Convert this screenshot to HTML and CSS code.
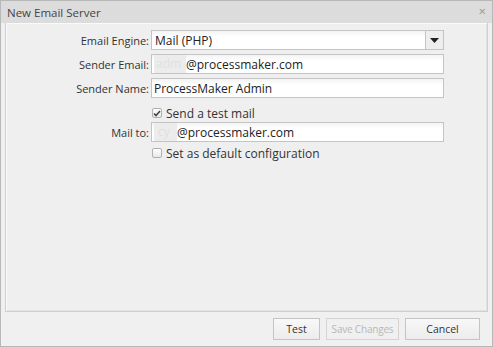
FILE: index.html
```html
<!DOCTYPE html>
<html lang="en">
<head>
    <meta charset="UTF-8">
    <title>New Email Server</title>
    <link rel="stylesheet" href="styles.css">
</head>
<body>
    <div class="window">
        <div class="title-bar">
            <span class="title">New Email Server</span>
            <span class="close">&times;</span>
        </div>
        <div class="panel">
            <div class="row">
                <label>Email Engine:</label>
                <div class="select">
                    <span class="select-value">Mail (PHP)</span>
                    <span class="select-btn">
                        <svg width="9" height="5" viewBox="0 0 9 5"><path d="M0 0h9L4.5 5z" fill="#222"/></svg>
                    </span>
                </div>
            </div>
            <div class="row">
                <label>Sender Email:</label>
                <div class="field"><span class="blur">adm</span>@processmaker.com</div>
            </div>
            <div class="row">
                <label>Sender Name:</label>
                <div class="field">ProcessMaker Admin</div>
            </div>
            <div class="row check-row first">
                <label></label>
                <span class="check">
                    <svg width="8" height="7" viewBox="0 0 8 7"><path d="M1 3.5l2 2L7 1" stroke="#444" stroke-width="1.6" fill="none"/></svg>
                </span>
                <span class="check-text">Send a test mail</span>
            </div>
            <div class="row mail-row">
                <label>Mail to:</label>
                <div class="field"><span class="blur short">cy</span>@processmaker.com</div>
            </div>
            <div class="row check-row">
                <label></label>
                <span class="check"></span>
                <span class="check-text">Set as default configuration</span>
            </div>
        </div>
        <div class="footer">
            <button class="btn test">Test</button>
            <button class="btn save" disabled>Save Changes</button>
            <button class="btn cancel">Cancel</button>
        </div>
    </div>
</body>
</html>
```

FILE: styles.css
```css
body {
    margin: 0;
    font-family: "Open Sans", Arial, sans-serif;
    font-size: 11px;
    color: #333;
}

.window {
    width: 493px;
    height: 347px;
    box-sizing: border-box;
    border: 1px solid #b8b8b8;
    background: #f0f0f0;
    display: flex;
    flex-direction: column;
}

.title-bar {
    height: 22px;
    background: #dcdcdc;
    display: flex;
    align-items: center;
    justify-content: space-between;
    padding: 0 6px;
    flex-shrink: 0;
}

.title {
    font-size: 11.5px;
    color: #444;
}

.close {
    font-size: 13px;
    color: #999;
    margin-top: -2px;
}

.panel {
    margin: 0 4px;
    height: 289px;
    box-sizing: border-box;
    border: 1px solid #cfcfcf;
    border-top: none;
    box-shadow: inset 1px 1px 0 #fafafa, inset -1px -1px 0 #e2e2e2;
    background: #efefef;
    padding-top: 7px;
}

.row {
    display: flex;
    align-items: center;
    margin-bottom: 4px;
}

.row label {
    width: 143px;
    text-align: right;
    padding-right: 2px;
    flex-shrink: 0;
}

.select, .field {
    width: 293px;
    height: 20px;
    box-sizing: border-box;
    border: 1px solid #c4c4c4;
    background: linear-gradient(#f4f4f4, #fff 6px);
    display: flex;
    align-items: center;
    font-size: 12px;
    color: #222;
}

.select {
    padding-left: 3px;
    justify-content: space-between;
}

.select-btn {
    width: 17px;
    height: 18px;
    border-left: 1px solid #c4c4c4;
    background: #eee;
    display: flex;
    align-items: center;
    justify-content: center;
}

.field {
    padding-left: 2px;
}

.blur {
    background: #ececec;
    color: #e0e0e0;
    padding: 0 4px 0 2px;
    height: 18px;
    line-height: 18px;
    width: 26px;
}

.blur.short {
    width: 15px;
    padding: 0 4px;
}

.check-row {
    height: 18px;
    margin-top: 2px;
    margin-bottom: 0;
}

.check-row.first {
    margin-top: 6px;
}

.mail-row {
    margin-bottom: 0;
}

.check {
    width: 8px;
    height: 8px;
    border: 1px solid #b0b0b0;
    border-radius: 2px;
    background: linear-gradient(#fff, #e8e8e8);
    margin-left: 1px;
    margin-right: 4px;
    display: flex;
    align-items: center;
    justify-content: center;
}

.check-text {
    font-size: 12px;
    color: #333;
}

.footer {
    flex: 1;
    display: flex;
    justify-content: flex-end;
    align-items: center;
    padding-right: 12px;
    gap: 6px;
}

.btn {
    height: 22px;
    font-family: "Open Sans", Arial, sans-serif;
    font-size: 10.5px;
    color: #333;
    border: 1px solid #c4c4c4;
    background: linear-gradient(#f8f8f8, #ececec);
    padding: 0;
}

.test {
    width: 47px;
}

.save {
    width: 73px;
    font-size: 10px;
    letter-spacing: -0.2px;
    color: #b8b8b8;
    border-color: #d4d4d4;
    background: #f0f0f0;
}

.cancel {
    width: 75px;
}
```
